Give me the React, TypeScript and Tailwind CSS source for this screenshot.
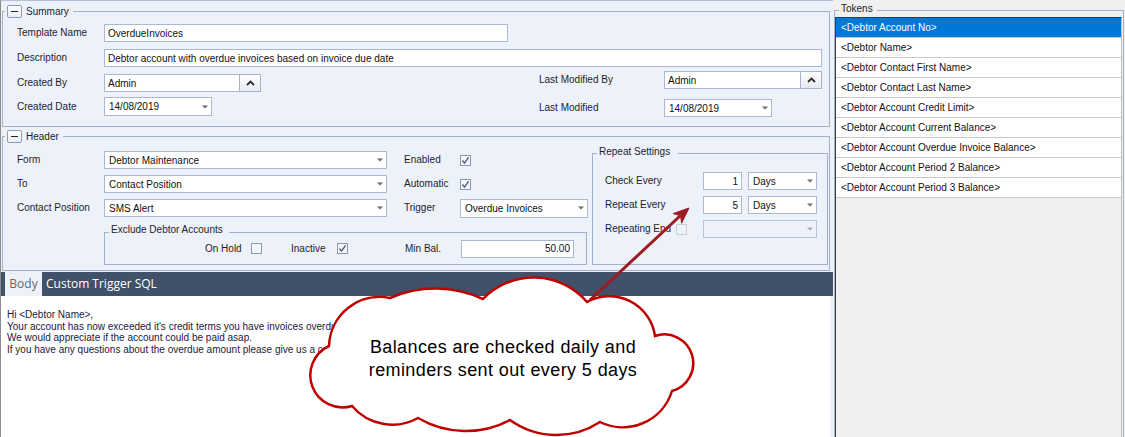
import type { ReactNode } from "react";

const lbl = "text-[10px] leading-none text-[#1d1d2b] whitespace-nowrap";

const tokens = [
  "<Debtor Account No>",
  "<Debtor Name>",
  "<Debtor Contact First Name>",
  "<Debtor Contact Last Name>",
  "<Debtor Account Credit Limit>",
  "<Debtor Account Current Balance>",
  "<Debtor Account Overdue Invoice Balance>",
  "<Debtor Account Period 2 Balance>",
  "<Debtor Account Period 3 Balance>",
];

// valleys of the cloud, clockwise, with the height of the bump that follows
const cloud: [number, number, number][] = [
  [329, 346, 18],
  [390, 298, 10],
  [483, 299, 23],
  [587, 302, 20],
  [655, 336, 30],
  [672, 391, 18],
  [600, 422, 14],
  [510, 420, 12],
  [418, 418, 12],
  [352, 406, 30],
];

function cloudPath() {
  let d = `M${cloud[0][0]} ${cloud[0][1]}`;
  cloud.forEach((p, i) => {
    const n = cloud[(i + 1) % cloud.length];
    const len = Math.hypot(n[0] - p[0], n[1] - p[1]);
    const h = p[2];
    const r = (len * len) / 4 / (2 * h) + h / 2;
    const large = h > len / 2 ? 1 : 0;
    d += ` A${r.toFixed(1)} ${r.toFixed(1)} 0 ${large} 1 ${n[0]} ${n[1]}`;
  });
  return d + "Z";
}

function DropArrow({ disabled = false }: { disabled?: boolean }) {
  return (
    <svg width="6" height="4" viewBox="0 0 6 4" className="shrink-0">
      <path d="M0 0.5H6L3 3.5Z" fill={disabled ? "#b89ab8" : "#6b6b6b"} />
    </svg>
  );
}

function TextBox({ value = "", className = "", right = false }: { value?: string; className?: string; right?: boolean }) {
  return (
    <div
      className={`flex items-center bg-white border border-[#abb8d1] px-[3px] text-[10px] text-[#111] ${right ? "justify-end" : ""} ${className}`}
    >
      {value}
    </div>
  );
}

function Combo({ value = "", className = "", disabled = false }: { value?: string; className?: string; disabled?: boolean }) {
  return (
    <div
      className={`flex items-center justify-between border pl-[4px] pr-[3px] text-[10px] text-[#111] ${
        disabled ? "bg-[#edf1fa] border-[#b9c4d8]" : "bg-white border-[#abb8d1]"
      } ${className}`}
    >
      <span>{value}</span>
      <DropArrow disabled={disabled} />
    </div>
  );
}

function UpButton({ className = "" }: { className?: string }) {
  return (
    <div
      className={`flex items-center justify-center border border-[#a7b3c9] bg-gradient-to-b from-white to-[#e6eaf2] ${className}`}
    >
      <svg width="9" height="6" viewBox="0 0 9 6">
        <path d="M1 5L4.5 1.5L8 5" fill="none" stroke="#2b2b2b" strokeWidth="1.8" />
      </svg>
    </div>
  );
}

function Check({ checked = false, disabled = false }: { checked?: boolean; disabled?: boolean }) {
  return (
    <div
      className={`w-[11px] h-[11px] shrink-0 border flex items-center justify-center ${
        disabled ? "border-[#c5cedd] bg-[#eef1f8]" : "border-[#8a9ab6] bg-[#f3f5fa]"
      }`}
    >
      {checked && (
        <svg width="9" height="9" viewBox="0 0 9 9">
          <path d="M1.5 4.5L3.5 7.2L7.6 1.3" fill="none" stroke="#4b5b78" strokeWidth="1.3" />
        </svg>
      )}
    </div>
  );
}

function MinusButton() {
  return (
    <div className="w-[15px] h-[13px] border border-[#8d9bb5] rounded-[2px] bg-gradient-to-b from-white to-[#e9edf5] flex items-center justify-center">
      <div className="w-[7px] h-[1px] bg-[#222]" />
    </div>
  );
}

function Legend({ title, button = false, className = "" }: { title: string; button?: boolean; className?: string }) {
  return (
    <div className={`absolute flex items-center gap-[4px] pl-[2px] pr-[4px] ${className}`}>
      {button && <MinusButton />}
      <span className={lbl}>{title}</span>
    </div>
  );
}

function Row({ children, className = "" }: { children: ReactNode; className?: string }) {
  return <div className={`flex items-center ${className}`}>{children}</div>;
}

export default function App() {
  return (
    <div className="relative w-[1125px] h-[437px] overflow-hidden flex bg-[#f0f0f0] font-['Liberation_Sans',Arial,sans-serif]">
      {/* left side: template form */}
      <div className="w-[833px] h-full flex flex-col bg-[#edf1fa] border-l border-[#8c8c8c] border-t border-t-[#b4c0d4]">
        {/* Summary */}
        <div className="relative mt-[10px] ml-[1px] w-[828px] h-[116px] shrink-0 border border-[#a3b2cc] pl-[14px] pt-[12px]">
          <Legend title="Summary" button className="left-[2px] top-[-7px] bg-[#edf1fa]" />
          <Row className="h-[18px]">
            <span className={`${lbl} w-[87px]`}>Template Name</span>
            <TextBox value="OverdueInvoices" className="w-[404px] h-[18px]" />
          </Row>
          <Row className="h-[18px] mt-[7px]">
            <span className={`${lbl} w-[87px]`}>Description</span>
            <TextBox value="Debtor account with overdue invoices based on invoice due date" className="w-[718px] h-[18px]" />
          </Row>
          <div className="flex items-start">
            <div className="w-[522px] mt-[7px]">
              <Row className="h-[18px]">
                <span className={`${lbl} w-[87px]`}>Created By</span>
                <TextBox value="Admin" className="w-[136px] h-[18px]" />
                <UpButton className="w-[22px] h-[18px] -ml-[1px]" />
              </Row>
              <Row className="h-[19px] mt-[5px]">
                <span className={`${lbl} w-[87px]`}>Created Date</span>
                <Combo value="14/08/2019" className="w-[108px] h-[19px]" />
              </Row>
            </div>
            <div className="mt-[4px]">
              <Row className="h-[18px]">
                <span className={`${lbl} w-[125px]`}>Last Modified By</span>
                <TextBox value="Admin" className="w-[137px] h-[18px]" />
                <UpButton className="w-[22px] h-[18px] -ml-[1px]" />
              </Row>
              <Row className="h-[18px] mt-[10px]">
                <span className={`${lbl} w-[125px]`}>Last Modified</span>
                <Combo value="14/08/2019" className="w-[108px] h-[18px]" />
              </Row>
            </div>
          </div>
        </div>

        {/* Header */}
        <div className="relative mt-[9px] ml-[1px] w-[828px] h-[135px] shrink-0 border border-[#a3b2cc] pl-[14px] pt-[14px] flex items-start">
          <Legend title="Header" button className="left-[2px] top-[-7px] bg-[#edf1fa]" />
          <div className="w-[575px] flex flex-col">
            <Row className="h-[18px]">
              <span className={`${lbl} w-[87px]`}>Form</span>
              <Combo value="Debtor Maintenance" className="w-[283px] h-[18px]" />
              <span className={`${lbl} w-[56px] ml-[17px]`}>Enabled</span>
              <Check checked />
            </Row>
            <Row className="h-[18px] mt-[6px]">
              <span className={`${lbl} w-[87px]`}>To</span>
              <Combo value="Contact Position" className="w-[283px] h-[18px]" />
              <span className={`${lbl} w-[56px] ml-[17px]`}>Automatic</span>
              <Check checked />
            </Row>
            <Row className="h-[18px] mt-[6px]">
              <span className={`${lbl} w-[87px]`}>Contact Position</span>
              <Combo value="SMS Alert" className="w-[283px] h-[18px]" />
              <span className={`${lbl} w-[56px] ml-[17px]`}>Trigger</span>
              <Combo value="Overdue Invoices" className="w-[128px] h-[19px]" />
            </Row>
            <div className="relative ml-[87px] mt-[15px] w-[483px] h-[33px] border border-[#a3b2cc] flex items-center">
              <Legend title="Exclude Debtor Accounts" className="left-[4px] top-[-8px] pr-[6px] bg-[#edf1fa]" />
              <span className={`${lbl} w-[46px] ml-[100px]`}>On Hold</span>
              <Check />
              <span className={`${lbl} w-[46px] ml-[29px]`}>Inactive</span>
              <Check checked />
              <span className={`${lbl} w-[56px] ml-[57px]`}>Min Bal.</span>
              <TextBox value="50.00" right className="w-[113px] h-[18px]" />
            </div>
          </div>

          <div className="relative mt-[2px] w-[236px] h-[112px] border border-[#a3b2cc] pl-[12px] pt-[18px]">
            <Legend title="Repeat Settings" className="left-[4px] top-[-7px] pr-[8px] bg-[#edf1fa]" />
            <Row className="h-[18px]">
              <span className={`${lbl} w-[98px]`}>Check Every</span>
              <TextBox value="1" right className="w-[39px] h-[18px]" />
              <Combo value="Days" className="w-[69px] h-[18px] ml-[6px]" />
            </Row>
            <Row className="h-[18px] mt-[6px]">
              <span className={`${lbl} w-[98px]`}>Repeat Every</span>
              <TextBox value="5" right className="w-[39px] h-[18px]" />
              <Combo value="Days" className="w-[69px] h-[18px] ml-[6px]" />
            </Row>
            <Row className="h-[18px] mt-[6px]">
              <span className={`${lbl} w-[71px]`}>Repeating End</span>
              <Check disabled />
              <Combo disabled className="w-[114px] h-[18px] ml-[16px]" />
            </Row>
          </div>
        </div>

        {/* tabs */}
        <div className="mt-[1px] h-[24px] shrink-0 bg-[#405169] flex items-stretch pl-[4px]">
          <div className="w-[37px] bg-[#eef1fa] flex items-center justify-center text-[12px] text-[#666] font-['Open_Sans',sans-serif]">
            Body
          </div>
          <div className="ml-[4px] flex items-center text-[12px] text-white font-['Open_Sans',sans-serif]">
            Custom Trigger SQL
          </div>
        </div>

        {/* body text */}
        <div className="flex-1 w-[829px] bg-white pl-[6px] pt-[13px] text-[10px] leading-[11.5px] text-[#1a1a3a]">
          <div>Hi &lt;Debtor Name&gt;,</div>
          <div>Your account has now exceeded it's credit terms you have invoices overdue.</div>
          <div>We would appreciate if the account could be paid asap.</div>
          <div>If you have any questions about the overdue amount please give us a call on.</div>
        </div>
      </div>

      {/* right side: tokens */}
      <div className="w-[292px] h-full flex flex-col">
        <div className="relative mt-[10px] ml-[1px] w-[290px] flex-1 flex flex-col border-t border-l border-r border-[#a3b2cc] pt-[6px]">
          <Legend title="Tokens" className="left-[4px] top-[-7px] bg-[#f0f0f0]" />
          <div className="w-[287px] flex-1 bg-[#f0f0f0] border-l border-t border-[#3c3c3c] border-r border-r-[#bdbdbd]">
            {tokens.map((t, i) => (
              <div
                key={t}
                className={`h-[20px] flex items-center pl-[5px] border-b border-[#c9c9c9] text-[10px] ${
                  i === 0 ? "bg-[#0078d7] text-white" : "bg-white text-[#111]"
                }`}
              >
                {t}
              </div>
            ))}
          </div>
        </div>
      </div>

      {/* callout drawn over the form */}
      <svg className="absolute inset-0 pointer-events-none" width="1125" height="437" viewBox="0 0 1125 437">
        <line x1="590" y1="300" x2="680" y2="216" stroke="#9e1b22" strokeWidth="3" />
        <path d="M689 208L681.6 223.2L680.6 215.7L673.2 213.6Z" fill="#9e1b22" stroke="#9e1b22" strokeWidth="1" strokeLinejoin="round" />
        <path d={cloudPath()} fill="white" stroke="#c00000" strokeWidth="2.5" />
      </svg>
      <div className="absolute left-[363px] top-[336px] w-[280px] text-center text-[18px] leading-[23px] tracking-[0.4px] text-black">
        Balances are checked daily and
        <br />
        reminders sent out every 5 days
      </div>
    </div>
  );
}
